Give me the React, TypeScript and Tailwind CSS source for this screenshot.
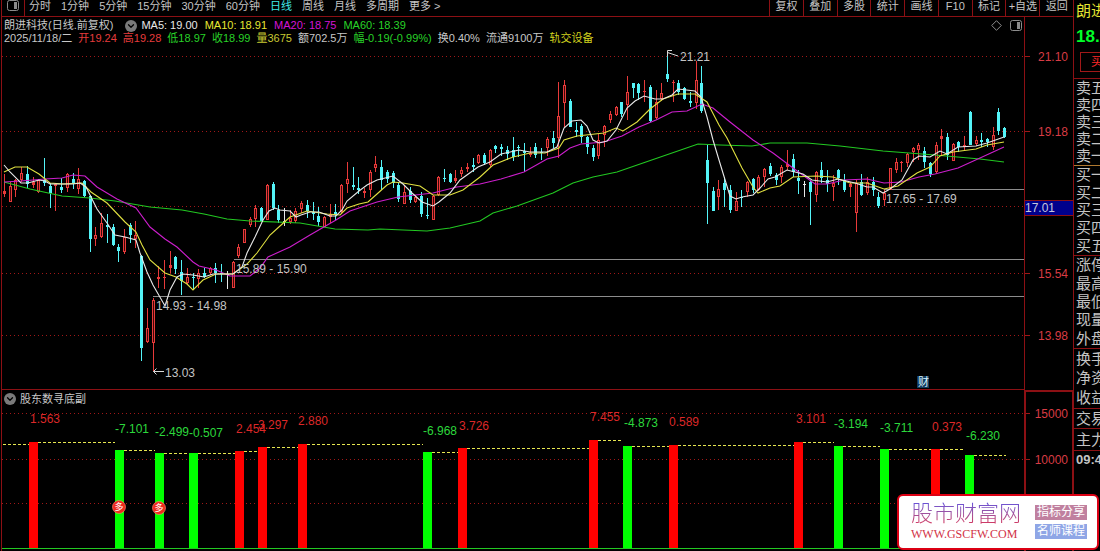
import React from 'react';
import { ChevronDown } from 'lucide-react';

type Kind = 'r' | 'c' | 'w';
// kind, high, body top, body bottom, low
type Candle = [Kind, number, number, number, number];

const periods = ['分时', '1分钟', '5分钟', '15分钟', '30分钟', '60分钟', '日线', '周线', '月线', '多周期', '更多 >'];
const tools = ['复权', '叠加', '多股', '统计', '画线', 'F10', '标记', '+自选', '返回'];

const averages = [
  { text: 'MA5: 19.00', color: 'text-[#e8e8e8]' },
  { text: 'MA10: 18.91', color: 'text-[#e6e632]' },
  { text: 'MA20: 18.75', color: 'text-[#d414d4]' },
  { text: 'MA60: 18.39', color: 'text-[#28d228]' },
];

const quote = [
  { text: '2025/11/18/二', color: 'text-[#c8c8c8]' },
  { text: '开19.24', color: 'text-[#e63c3c]' },
  { text: '高19.28', color: 'text-[#e63c3c]' },
  { text: '低18.97', color: 'text-[#28d228]' },
  { text: '收18.99', color: 'text-[#28d228]' },
  { text: '量3675', color: 'text-[#c8c832]' },
  { text: '额702.5万', color: 'text-[#c8c8c8]' },
  { text: '幅-0.19(-0.99%)', color: 'text-[#28d228]' },
  { text: '换0.40%', color: 'text-[#c8c8c8]' },
  { text: '流通9100万', color: 'text-[#c8c8c8]' },
  { text: '轨交设备', color: 'text-[#d2d21e]' },
];

const candles: Candle[] = [
  ['r', 174, 191, 194, 197], ['r', 182, 186, 202, 202], ['r', 179, 180, 190, 197], ['r', 167, 173, 180, 182],
  ['c', 166, 174, 184, 188], ['r', 177, 182, 185, 188], ['r', 179, 180, 192, 193], ['c', 158, 180, 183, 186],
  ['c', 183, 186, 193, 208], ['r', 183, 184, 186, 211], ['c', 178, 187, 190, 193], ['r', 173, 174, 188, 192],
  ['c', 173, 179, 184, 189], ['r', 168, 179, 189, 194], ['c', 180, 181, 196, 197], ['c', 195, 196, 239, 252],
  ['r', 227, 235, 239, 246], ['r', 213, 223, 237, 238], ['c', 214, 225, 227, 243], ['c', 224, 227, 245, 246],
  ['c', 244, 247, 251, 262], ['r', 229, 237, 252, 254], ['c', 223, 225, 235, 243], ['r', 221, 235, 239, 248],
  ['c', 255, 256, 348, 361], ['r', 308, 328, 342, 343], ['r', 298, 300, 343, 371], ['r', 266, 277, 279, 288],
  ['r', 260, 277, 278, 289], ['r', 251, 265, 268, 273], ['c', 256, 257, 269, 274], ['c', 260, 272, 281, 295],
  ['r', 268, 277, 283, 284], ['c', 273, 277, 278, 290], ['r', 269, 273, 279, 288], ['c', 268, 273, 277, 278],
  ['r', 267, 268, 273, 275], ['c', 263, 268, 273, 283], ['c', 264, 273, 274, 282], ['w', 271, 274, 275, 289],
  ['r', 261, 262, 288, 288], ['r', 244, 247, 256, 258], ['r', 229, 229, 243, 243], ['r', 217, 219, 225, 227],
  ['r', 205, 208, 219, 227], ['c', 207, 208, 221, 222], ['r', 184, 185, 220, 220], ['c', 182, 184, 208, 210],
  ['c', 205, 210, 220, 223], ['w', 208, 221, 222, 226], ['r', 210, 218, 222, 224], ['r', 208, 211, 221, 223],
  ['r', 201, 203, 209, 213], ['c', 200, 205, 211, 218], ['c', 202, 212, 214, 220], ['c', 207, 216, 222, 226],
  ['r', 216, 217, 227, 227], ['r', 204, 214, 217, 223], ['c', 204, 212, 215, 220], ['r', 184, 185, 212, 213],
  ['r', 162, 179, 184, 193], ['c', 167, 185, 187, 190], ['c', 177, 188, 190, 194], ['r', 188, 191, 193, 198],
  ['r', 170, 172, 190, 197], ['r', 156, 164, 168, 172], ['c', 160, 167, 180, 190], ['c', 170, 172, 179, 183],
  ['c', 171, 173, 183, 188], ['c', 183, 185, 199, 202], ['r', 186, 192, 204, 204], ['c', 187, 191, 200, 203],
  ['r', 195, 197, 202, 203], ['c', 192, 196, 214, 217], ['c', 198, 215, 216, 219], ['r', 195, 196, 220, 220],
  ['r', 176, 177, 195, 196], ['c', 169, 178, 179, 182], ['c', 173, 174, 182, 183], ['r', 170, 178, 181, 183],
  ['r', 167, 170, 174, 177], ['r', 163, 167, 169, 172], ['c', 158, 165, 167, 172], ['r', 154, 155, 163, 164],
  ['c', 153, 155, 163, 165], ['r', 149, 150, 165, 167], ['c', 145, 146, 149, 153], ['c', 144, 147, 149, 156],
  ['c', 146, 150, 154, 160], ['c', 137, 150, 157, 161], ['c', 145, 147, 148, 157], ['c', 143, 151, 153, 172],
  ['r', 147, 153, 155, 157], ['c', 143, 147, 155, 158], ['c', 148, 152, 153, 160], ['r', 137, 139, 148, 156],
  ['c', 131, 138, 143, 148], ['r', 82, 116, 138, 158], ['r', 80, 85, 103, 127], ['c', 99, 101, 127, 127],
  ['c', 122, 130, 132, 137], ['c', 124, 126, 137, 143], ['c', 136, 137, 147, 154], ['c', 145, 148, 157, 161],
  ['r', 134, 140, 156, 159], ['r', 125, 126, 135, 147], ['r', 111, 114, 120, 123], ['r', 106, 107, 115, 116],
  ['c', 102, 102, 114, 117], ['r', 76, 92, 105, 120], ['c', 83, 83, 88, 98], ['c', 83, 84, 93, 100],
  ['r', 80, 91, 92, 102], ['c', 85, 87, 121, 122], ['r', 90, 102, 118, 119], ['r', 83, 93, 99, 101],
  ['c', 52, 74, 79, 82], ['r', 80, 82, 83, 102], ['c', 80, 83, 92, 95], ['c', 87, 88, 99, 100],
  ['c', 92, 101, 103, 107], ['r', 61, 80, 103, 109], ['c', 66, 83, 111, 113], ['c', 145, 160, 183, 224],
  ['c', 187, 191, 211, 211], ['r', 180, 189, 197, 210], ['c', 177, 183, 190, 207], ['c', 185, 190, 210, 213],
  ['r', 192, 201, 211, 211], ['c', 190, 197, 198, 207], ['r', 181, 182, 192, 197], ['c', 178, 179, 190, 193],
  ['r', 175, 177, 190, 191], ['r', 168, 169, 177, 187], ['c', 163, 166, 174, 176], ['c', 173, 175, 180, 185],
  ['r', 165, 167, 177, 183], ['r', 150, 164, 167, 170], ['c', 154, 159, 172, 177], ['c', 170, 178, 181, 194],
  ['w', 181, 184, 185, 197], ['c', 180, 182, 192, 225], ['r', 171, 172, 195, 202], ['c', 162, 170, 178, 183],
  ['c', 170, 180, 184, 192], ['r', 175, 183, 187, 201], ['c', 169, 170, 178, 185], ['c', 174, 180, 190, 192],
  ['r', 182, 184, 187, 197], ['r', 180, 183, 213, 232], ['c', 174, 182, 195, 196], ['r', 177, 182, 193, 195],
  ['c', 177, 182, 190, 196], ['c', 192, 197, 206, 208], ['r', 190, 193, 200, 206], ['r', 168, 168, 190, 190],
  ['r', 158, 162, 170, 173], ['r', 161, 162, 163, 172], ['r', 153, 154, 163, 167], ['r', 147, 148, 152, 162],
  ['r', 143, 145, 150, 160], ['c', 147, 151, 162, 168], ['c', 162, 163, 174, 177], ['r', 142, 145, 172, 173],
  ['r', 129, 136, 139, 155], ['c', 133, 137, 155, 160], ['r', 143, 144, 161, 161], ['c', 141, 142, 147, 152],
  ['r', 136, 145, 147, 151], ['c', 111, 112, 145, 145], ['r', 136, 140, 144, 146], ['c', 133, 140, 142, 147],
  ['c', 138, 139, 142, 147], ['r', 127, 135, 147, 150], ['c', 108, 112, 131, 135], ['c', 127, 128, 137, 138],
];

const candleColor: Record<Kind, string> = { r: '#e83a3a', c: '#54f4f8', w: '#e8e8e8' };

const lines = [
  {
    color: '#22c822',
    points:
      '4,182 30,189 62,196 90,198 115,201 150,207 182,210 204,214 227,219 250,221 300,223 335,229 368,230 380,229 427,231 450,228 480,221 493,213 517,206 553,193 573,183 593,177 617,172 643,163 672,153 698,144 720,145 752,146 770,143 807,143 840,146 883,151 935,155 980,159 1004,162',
  },
  {
    color: '#cc1ecc',
    points:
      '4,182 21,181 45,179 62,178 73,175 85,176 97,187 117,199 136,208 150,227 165,239 177,247 193,262 199,266 216,270 230,276 250,276 260,268 268,257 290,247 310,235 336,220 350,211 377,202 398,197 433,193 457,187 480,184 501,179 524,172 547,159 559,156 570,148 581,144 604,142 622,136 639,127 656,120 672,112 687,111 702,104 713,108 719,113 730,122 753,140 773,153 793,168 804,176 815,184 827,184 844,180 867,179 884,183 901,182 919,177 935,174 958,168 980,158 1004,147',
  },
  {
    color: '#e0e040',
    points:
      '4,172 15,167 27,167 39,174 50,183 63,184 82,183 91,192 107,203 125,222 136,232 142,245 150,260 165,273 176,277 187,284 193,290 203,280 216,274 233,274 247,264 257,253 270,235 280,226 290,217 307,211 327,214 340,215 347,208 359,204 368,202 377,194 387,185 393,182 403,183 420,186 433,195 450,195 463,190 480,177 493,165 513,157 530,153 545,153 559,148 564,140 577,136 604,133 616,128 623,131 637,122 650,109 663,99 678,94 695,94 707,102 719,125 727,138 742,168 753,187 758,193 770,188 780,186 793,177 816,176 833,177 850,183 867,183 884,189 898,186 917,173 930,167 940,156 953,152 976,149 987,145 1004,142',
  },
  {
    color: '#e8e8e8',
    points:
      '4,165 10,172 21,183 28,183 39,180 45,181 50,184 62,184 73,184 80,183 86,187 91,197 97,209 107,223 115,235 125,237 136,240 140,253 147,272 153,285 165,306 170,290 177,277 183,274 193,275 204,277 213,274 233,274 242,267 247,253 255,237 263,220 269,211 275,208 280,210 290,211 296,217 301,215 310,212 319,212 330,216 336,216 342,210 347,201 359,191 367,185 377,180 393,176 403,184 412,193 422,202 433,206 439,202 450,193 460,180 478,167 490,162 501,154 519,150 530,152 547,152 557,147 564,128 572,121 581,120 587,126 593,140 599,143 607,141 616,130 627,108 635,101 644,96 655,99 663,99 672,95 678,89 695,91 701,97 707,117 713,140 719,160 730,196 736,199 742,197 753,195 760,188 768,179 775,177 787,170 803,174 812,180 827,182 838,179 855,183 867,187 873,187 883,193 890,189 902,180 913,160 919,156 930,157 940,151 947,154 958,147 976,146 987,143 1004,137',
  },
];

const gaps = [
  { x: 153, y: 296, tx: 156, label: '14.93 - 14.98' },
  { x: 234, y: 259, tx: 236, label: '15.89 - 15.90' },
  { x: 884, y: 189, tx: 886, label: '17.65 - 17.69' },
];

const prices = [
  { y: 56, label: '21.10' },
  { y: 131, label: '19.18' },
  { y: 206, label: '' },
  { y: 273, label: '15.54' },
  { y: 335, label: '13.98' },
];

// x, top, up, label, label x, label centre
const holders: [number, number, boolean, string, number, number][] = [
  [29, 442, true, '1.563', 30, 418],
  [115, 450, false, '-7.101', 115, 428],
  [155, 453, false, '-2.499', 155, 431],
  [189, 453, false, '-0.507', 189, 432],
  [235, 451, true, '2.454', 236, 428],
  [258, 447, true, '3.297', 258, 424],
  [298, 444, true, '2.880', 298, 420],
  [423, 452, false, '-6.968', 423, 430],
  [458, 448, true, '3.726', 459, 425],
  [589, 440, true, '7.455', 590, 416],
  [623, 446, false, '-4.873', 624, 422],
  [669, 445, true, '0.589', 669, 421],
  [794, 442, true, '3.101', 796, 418],
  [834, 446, false, '-3.194', 834, 423],
  [880, 449, false, '-3.711', 880, 427],
  [931, 449, true, '0.373', 932, 426],
  [965, 455, false, '-6.230', 966, 435],
];

function SplitIcon({ className }: { className: string }) {
  return (
    <svg viewBox="0 0 12 11" className={className} aria-hidden="true">
      <rect x="0.5" y="0.5" width="11" height="10" rx="2" fill="none" stroke="#8c8c8c" />
      <rect x="7" y="2" width="3" height="7" fill="#8c8c8c" />
    </svg>
  );
}

function Toggle({ label }: { label: string }) {
  return (
    <button aria-label={label} className="flex size-3 shrink-0 items-center justify-center rounded-full bg-[#7a7a7a] text-black">
      <ChevronDown className="size-2.5" strokeWidth={3} />
    </button>
  );
}

function Toolbar() {
  return (
    <nav className="flex h-[17px] border-b border-[#8c1014] text-[11px] leading-3 text-[#c4c4c4]">
      <div className="flex w-[23px] shrink-0 justify-center border-r border-[#8c1014]">
        <SplitIcon className="h-[11px] w-3" />
      </div>
      <div className="flex flex-1 gap-2.5 overflow-hidden pl-1 whitespace-nowrap">
        {periods.map((p) => (
          <button key={p} className={p === '日线' ? 'h-3 text-[#40e8e8]' : 'h-3'}>
            {p}
          </button>
        ))}
      </div>
      <div className="flex w-[304px] shrink-0">
        {tools.map((t) => (
          <button key={t} className="flex-1 basis-0 border-l border-[#8c1014] pb-1 whitespace-nowrap">
            {t}
          </button>
        ))}
      </div>
    </nav>
  );
}

function PlotHeader() {
  return (
    <header className="h-7 overflow-hidden pt-0.5 pl-0.5 text-[11px] leading-[13px] whitespace-nowrap">
      <div className="flex items-center">
        <h1 className="pr-3 text-[#c8c8c8]">朗进科技(日线.前复权)</h1>
        <Toggle label="指标" />
        <div className="flex flex-1 gap-[7px] pl-1">
          {averages.map((a) => (
            <span key={a.text} className={a.color}>{a.text}</span>
          ))}
        </div>
        <div className="flex items-center gap-2 pr-0.5">
          <svg viewBox="0 0 11 11" className="size-[11px]" aria-hidden="true">
            <path d="M5.5 0.7 10.3 5.5 5.5 10.3 0.7 5.5Z" fill="none" stroke="#8c8c8c" />
          </svg>
          <SplitIcon className="h-[11px] w-3" />
        </div>
      </div>
      <div className="flex gap-1.5">
        {quote.map((q) => (
          <span key={q.text} className={q.color}>{q.text}</span>
        ))}
      </div>
    </header>
  );
}

function PricePlot() {
  return (
    <svg viewBox="2 45 1022 344" className="block h-[344px] w-full text-[12px]">
      {prices.map((p) => (
        <path key={p.y} d={`M2 ${p.y}.5H1024`} stroke="#a01818" strokeDasharray="1 3" />
      ))}
      {gaps.map((g) => (
        <path key={g.y} d={`M${g.x} ${g.y}.5H1024`} stroke="#8c8c8c" />
      ))}
      <g shapeRendering="crispEdges">
        {candles.map(([kind, high, top, bottom, low], i) => {
          const x = Math.round(4 + i * 5.715);
          const h = Math.max(bottom - top, 1);
          return (
            <g key={i} fill={candleColor[kind]}>
              <rect x={x} y={high} width="1" height={low - high} />
              <rect x={x - 1} y={top} width="3" height={h} />
              {kind === 'r' && h > 3 && <rect x={x} y={top + 1} width="1" height={h - 2} fill="#3c0808" />}
            </g>
          );
        })}
      </g>
      {lines.map((l) => (
        <polyline key={l.color} points={l.points} fill="none" stroke={l.color} strokeWidth="1.1" />
      ))}
      <g fill="#c4c4c4">
        {gaps.map((g) => (
          <text key={g.label} x={g.tx} y={g.y + 14}>{g.label}</text>
        ))}
        <text x="165" y="377">13.03</text>
        <text x="680" y="61">21.21</text>
      </g>
      <path d="M164 371.5H153.5M156.5 368.5 153.5 371.5 156.5 374.5M678 56 667.5 52.5M672 50.5H667.5V56" fill="none" stroke="#d8d8d8" />
      <rect x="917" y="376" width="12" height="12" fill="#12395c" />
      <text x="918" y="386" fontSize="11" fill="#d8f4ff">财</text>
    </svg>
  );
}

function HolderPlot() {
  return (
    <svg viewBox="2 407 1022 144" className="block h-36 w-full text-[12px]">
      {[413, 459, 503].map((y) => (
        <path key={y} d={`M2 ${y}.5H1024`} stroke="#a01818" strokeDasharray="1 3" />
      ))}
      <path d="M3 444.5H29" stroke="#e6e650" strokeDasharray="3 2" />
      {holders.map(([x, top, up], i) => {
        const end = i + 1 < holders.length ? holders[i + 1][0] : 1006;
        return (
          <g key={x}>
            <rect x={x} y={top} width="9" height={548 - top} fill={up ? '#ff0000' : '#00ff00'} />
            <path d={`M${x + 9} ${top}.5H${end}`} stroke="#e6e650" strokeDasharray="3 2" />
          </g>
        );
      })}
      {holders.map(([x, , up, label, lx, ly]) => (
        <text key={x} x={lx} y={ly + 5} fill={up ? '#dc2828' : '#2cd83c'}>{label}</text>
      ))}
      <path d="M2 548.5H1024" stroke="#22c822" />
      {[[119, 507], [159, 508]].map(([x, y]) => (
        <g key={x}>
          <circle cx={x} cy={y} r="6.5" fill="#ee2a1c" stroke="#ff8a78" strokeWidth="0.6" />
          <text x={x} y={y + 3} textAnchor="middle" fontSize="9" fill="#fff">多</text>
        </g>
      ))}
    </svg>
  );
}

function Axis() {
  return (
    <div className="w-[49px] shrink-0 text-[12px]">
      <div className="border-l border-[#8c1014]">
        <svg viewBox="1025 17 48 373" className="block h-[373px] w-full">
          {prices.map((p) => (
            <g key={p.y}>
              <path d={`M1025 ${p.y}.5h5`} stroke="#a01818" />
              <text x="1068" y={p.y + 5} textAnchor="end" fill="#d83c44">{p.label}</text>
            </g>
          ))}
          <rect x="1025" y="200" width="48" height="16" fill="#00008c" />
          <path d="M1025 200.5h48M1025 215.5h48" stroke="#8c1014" />
          <text x="1025" y="212" fill="#c8c8dc">17.01</text>
        </svg>
      </div>
      <div className="border-t-2 border-r border-l-2 border-[#8c1014]">
        <svg viewBox="1026 392 46 159" className="block h-[159px] w-full">
          <path d="M1026 413.5h4M1026 459.5h4" stroke="#a01818" />
          <text x="1068" y="418" textAnchor="end" fill="#d83c44">15000</text>
          <text x="1068" y="464" textAnchor="end" fill="#d83c44">10000</text>
        </svg>
      </div>
    </div>
  );
}

function Rows({ items, className }: { items: string[]; className: string }) {
  return (
    <ul className={`flex flex-col justify-around border-b pl-0.5 ${className}`}>
      {items.map((item) => (
        <li key={item}>{item}</li>
      ))}
    </ul>
  );
}

function QuotePanel() {
  return (
    <aside className="w-[27px] shrink-0 overflow-hidden border-l border-[#8c1014] text-[15px] leading-4 whitespace-nowrap text-[#c4c4c4]">
      <div className="h-[79px] border-b border-[#8c1014]">
        <h2 className="pt-[3px] pl-0.5 text-[#e6e632]">朗进科技</h2>
        <p className="pt-2.5 pl-0.5 text-[17px] font-bold text-[#00ff28]">18.99</p>
        <button className="mt-[7px] ml-1.5 h-5 w-14 border border-[#a01818] pl-2.5 text-left text-[12px] leading-4 text-[#ff2828]">
          买
        </button>
      </div>
      <Rows items={['卖五', '卖四', '卖三', '卖二', '卖一']} className="h-[87px] border-[#b07830]" />
      <Rows items={['买一', '买二', '买三', '买四', '买五']} className="h-[90px] border-[#8c1014]" />
      <Rows items={['涨停', '最高', '最低', '现量', '外盘']} className="h-[93px] border-[#8c1014]" />
      <Rows items={['换手', '净资', '收益']} className="h-[60px] border-[#8c1014]" />
      <Rows items={['交易']} className="h-5 border-[#8c1014]" />
      <Rows items={['主力']} className="h-[22px] border-[#8c1014]" />
      <p className="pl-0.5 text-[13px] leading-[18px] font-bold">09:45</p>
    </aside>
  );
}

function SiteBadge() {
  return (
    <a
      href="#"
      className="absolute right-px bottom-px flex h-14 w-[202px] items-center justify-between rounded-md border-2 border-[#dc0014] bg-white pr-2.5 pl-3"
    >
      <span className="flex flex-col">
        <span className="bg-linear-to-b from-[#6450dc] to-[#dc2850] bg-clip-text text-[22px] leading-6 font-light text-transparent">
          股市财富网
        </span>
        <span className="font-['Liberation_Serif',serif] text-[12px] leading-4 text-[#d23246]">WWW.GSCFW.COM</span>
      </span>
      <span className="flex flex-col gap-1 text-[12px] leading-[15px] text-white">
        <span className="bg-[#c0809f] px-0.5">指标分享</span>
        <span className="bg-[#8fa6e6] px-0.5">名师课程</span>
      </span>
    </a>
  );
}

export default function App() {
  return (
    <div className="relative flex min-h-screen w-full overflow-hidden bg-black font-['Liberation_Sans','Noto_Sans_CJK_SC',sans-serif]">
      <main className="ml-px flex min-w-0 flex-1 flex-col border-l border-[#8c1014]">
        <Toolbar />
        <div className="flex">
          <div className="min-w-0 flex-1">
            <PlotHeader />
            <PricePlot />
            <section className="border-t border-[#8c1014]">
              <div className="flex h-[17px] items-center gap-1 pl-0.5">
                <Toggle label="副图指标" />
                <h2 className="text-[11px] leading-4 text-[#c8c8c8]">股东数寻底副</h2>
              </div>
              <HolderPlot />
            </section>
          </div>
          <Axis />
        </div>
      </main>
      <QuotePanel />
      <SiteBadge />
    </div>
  );
}
